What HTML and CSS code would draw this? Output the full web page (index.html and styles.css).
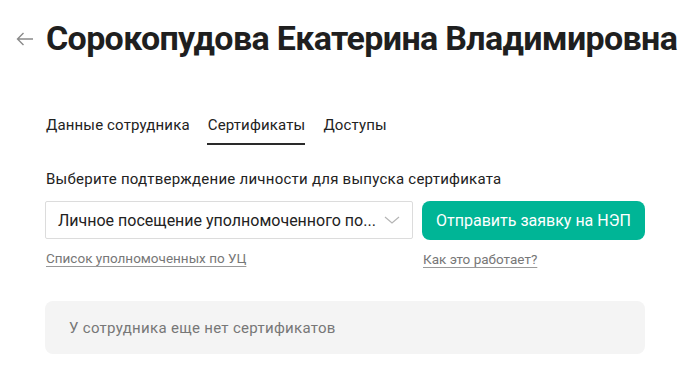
FILE: index.html
```html
<!DOCTYPE html>
<html lang="ru">
<head>
    <meta charset="utf-8">
    <link rel="stylesheet" href="styles.css">
</head>
<body>

<div class="pageHeader">
    <span class="backArrow">
        <svg width="18" height="14" viewBox="0 0 18 14"><path d="M17 7H1.5M7.5 1L1.5 7l6 6" fill="none" stroke="#8a8a8a" stroke-width="1.4"/></svg>
    </span>
    <h1 class="pageTitle">Сорокопудова Екатерина Владимировна</h1>
</div>

<div class="content">
    <div class="tabs">
        <span class="tab">Данные сотрудника</span>
        <span class="tab tabActive">Сертификаты</span>
        <span class="tab">Доступы</span>
    </div>

    <div class="certForm">
        <p class="formLabel">Выберите подтверждение личности для выпуска сертификата</p>
        <div class="formRow">
            <div class="formCol">
                <div class="selectBox">
                    <span class="selectText">Личное посещение уполномоченного по...</span>
                    <svg class="selectArrow" width="16" height="8" viewBox="0 0 16 8"><path d="M1 1l7 6 7-6" fill="none" stroke="#b5b5b5" stroke-width="1.2"/></svg>
                </div>
                <a class="formLink" href="#">Список уполномоченных по УЦ</a>
            </div>
            <div class="formCol">
                <span class="sendButton">Отправить заявку на НЭП</span>
                <a class="formLink" href="#">Как это работает?</a>
            </div>
        </div>
    </div>

    <div class="emptyBox">У сотрудника еще нет сертификатов</div>
</div>

</body>
</html>
```

FILE: styles.css
```css
body {
	margin: 0;
	font-family: Roboto, "Liberation Sans", sans-serif;
	color: #222;
	background: #fff;
}

.pageHeader {
	display: flex;
	align-items: center;
	gap: 12px;
	padding: 18px 0 0 16px;
}

.backArrow {
	display: flex;
	padding-top: 2px;
}

.pageTitle {
	margin: 0;
	font-size: 34px;
	line-height: 40px;
	font-weight: 700;
	letter-spacing: -0.65px;
	color: #1f1f1f;
	white-space: nowrap;
}

.content {
	width: 600px;
	padding: 0 0 0 45px;
}

.tabs {
	display: flex;
	gap: 17px;
	margin-top: 55px;
	font-size: 15px;
	letter-spacing: 0.15px;
}

.tab {
	padding: 3px 0 9px 1px;
	border-bottom: 2px solid transparent;
	line-height: 18px;
}

.tabActive {
	border-bottom-color: #2a2a2a;
}

.formLabel {
	margin: 24px 0 0 1px;
	font-size: 15px;
	line-height: 20px;
	letter-spacing: 0.25px;
}

.formRow {
	display: flex;
	gap: 9px;
	margin-top: 12px;
}

.formCol {
	display: flex;
	flex-direction: column;
}

.selectBox {
	display: flex;
	align-items: center;
	justify-content: space-between;
	width: 368px;
	height: 38px;
	box-sizing: border-box;
	border: 1px solid #dcdcdc;
	border-radius: 2px;
	padding: 0 13px 0 12px;
	font-size: 16px;
}

.selectText {
	white-space: nowrap;
}

.selectArrow {
	flex-shrink: 0;
	margin-left: 8px;
}

.sendButton {
	display: flex;
	align-items: center;
	justify-content: center;
	width: 223px;
	height: 39px;
	border-radius: 8px;
	background: #00b596;
	color: #fff;
	font-size: 16px;
}

.formLink {
	margin: 11px 0 0 1px;
	font-size: 13.5px;
	color: #777;
	text-decoration: underline;
	text-underline-offset: 3px;
	text-decoration-color: #999;
}

.emptyBox {
	margin-top: 34px;
	height: 53px;
	box-sizing: border-box;
	padding: 0 24px;
	display: flex;
	align-items: center;
	border-radius: 8px;
	background: #f4f4f4;
	color: #777;
	font-size: 15px;
	letter-spacing: 0.3px;
}
```
